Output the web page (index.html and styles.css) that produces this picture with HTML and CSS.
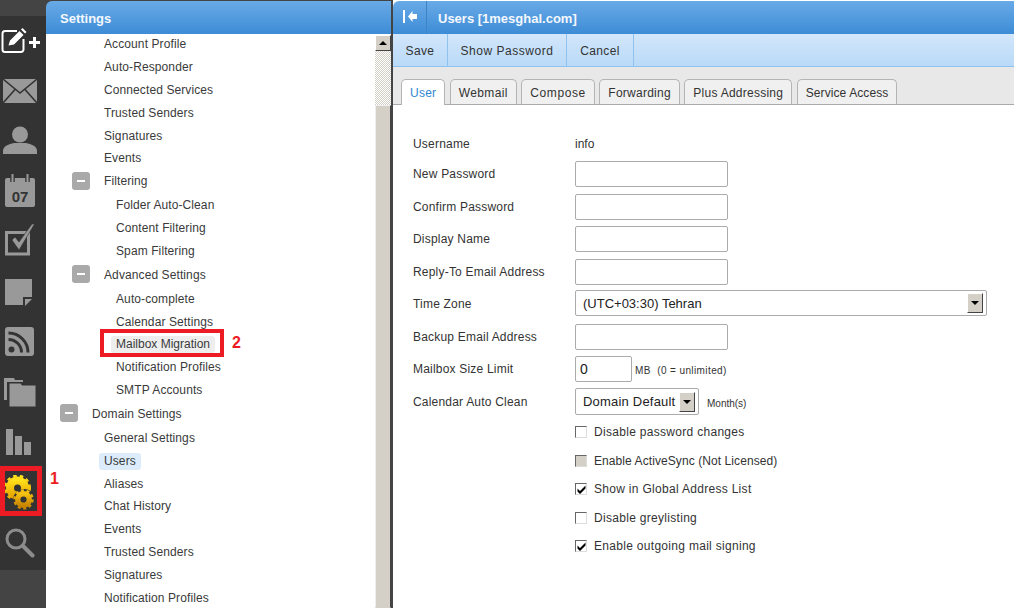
FILE: index.html
```html
<!DOCTYPE html>
<html lang="en">
<head>
<meta charset="utf-8">
<title>Users [1mesghal.com]</title>
<link rel="stylesheet" href="styles.css">
</head>
<body>
<div class="app">
  <nav class="rail">
    <div class="rail-top"></div>
    <div class="rail-icons">
      <svg class="ic ic-new" viewBox="0 0 42 30"><path d="M17 4H5a2.500 2.500 0 0 0-2.500 2.500v16A2.500 2.500 0 0 0 5 25h16a2.500 2.500 0 0 0 2.500-2.500V12" fill="none" stroke="#fff" stroke-width="2"/><path d="M8.500 18.500l1.500-5L19.500 4l4 4L14 17.500zM21 2.500L22.500 1l4 4L25 6.500z" fill="#fff"/><path d="M33 10h3v4h4v3h-4v4h-3v-4h-4v-3h4z" fill="#fff"/></svg>
      <svg class="ic ic-mail" viewBox="0 0 34 25"><path d="M0 1h34v24H0z" fill="#999"/><path d="M0 1l17 14L34 1M0 25l12-13.500M34 25L22 11.500" fill="none" stroke="#333" stroke-width="1.600"/></svg>
      <svg class="ic ic-user" viewBox="0 0 34 28"><circle cx="17" cy="8.500" r="8" fill="#999"/><path d="M0 28v-3c0-5 6-7 11-8h12c5 1 11 3 11 8v3z" fill="#999"/></svg>
      <svg class="ic ic-cal" viewBox="0 0 30 34"><path d="M2 5h26a2 2 0 0 1 2 2v25a2 2 0 0 1-2 2H2a2 2 0 0 1-2-2V7a2 2 0 0 1 2-2z" fill="#999"/><path d="M7.500 0v9M22.500 0v9" stroke="#333" stroke-width="4.500" fill="none"/><path d="M7.500 1v8M22.500 1v8" stroke="#999" stroke-width="2" fill="none"/><text x="15" y="29" class="cal-num">07</text></svg>
      <svg class="ic ic-task" viewBox="0 0 30 32"><path d="M1.500 8.500h22v21.500h-22z" fill="none" stroke="#999" stroke-width="3"/><path d="M7 16l3-3 4 5L27 0h2.500L14 26z" fill="#999" stroke="#333" stroke-width=".6"/></svg>
      <svg class="ic ic-note" viewBox="0 0 27 27"><path d="M0 0h27v18h-9v8H0z" fill="#999"/><path d="M20 20h7l-7 7z" fill="#999"/></svg>
      <svg class="ic ic-rss" viewBox="0 0 29 29"><rect width="29" height="29" rx="3" fill="#999"/><circle cx="6.500" cy="22.500" r="3" fill="#333"/><path d="M3.500 12.500a13 13 0 0 1 13 13M3.500 6a19.500 19.500 0 0 1 19.500 19.500" fill="none" stroke="#333" stroke-width="3"/></svg>
      <svg class="ic ic-folder" viewBox="0 0 32 29"><path d="M0 0h10l1 2h8v2H3v18H0z" fill="#999"/><path d="M5 5h12l1 2h14v22H5z" fill="#999" stroke="#333" stroke-width="1"/></svg>
      <svg class="ic ic-stats" viewBox="0 0 26 26"><path d="M0 0h7v26H0zM9 7h7v19H9zM18 13h7v13h-7z" fill="#999"/></svg>
      <svg class="ic ic-gear" viewBox="0 0 32 36">
        <defs>
          <linearGradient id="g1" x1="0" y1="0" x2="0" y2="1"><stop offset="0" stop-color="#ffe01a"/><stop offset="1" stop-color="#e8a800"/></linearGradient>
          <linearGradient id="g2" x1="0" y1="0" x2="0" y2="1"><stop offset="0" stop-color="#f5c211"/><stop offset="1" stop-color="#c98500"/></linearGradient>
        </defs>
        <circle cx="12.500" cy="13" r="7.500" fill="none" stroke="url(#g1)" stroke-width="8"/>
        <circle cx="12.500" cy="13" r="12" fill="none" stroke="url(#g1)" stroke-width="3" stroke-dasharray="3.400 3.100"/>
        <circle cx="19" cy="25" r="11" fill="#333"/>
        <circle cx="18.500" cy="24.500" r="5.800" fill="none" stroke="url(#g2)" stroke-width="5.400"/>
        <circle cx="18.500" cy="24.500" r="9" fill="none" stroke="url(#g2)" stroke-width="2.500" stroke-dasharray="3 2.650"/>
      </svg>
      <svg class="ic ic-search" viewBox="0 0 30 30"><circle cx="11" cy="11" r="9" fill="none" stroke="#8c8c8c" stroke-width="3"/><path d="M18 18L27.500 27.500" stroke="#8c8c8c" stroke-width="4" stroke-linecap="round"/></svg>
    </div>
    <div class="rail-bottom"></div>
    <div class="mark mark-gear"></div>
    <span class="mark-num mark-num-1">1</span>
  </nav>

  <aside class="settings">
    <header class="pane-title settings-title"><span class="title-text">Settings</span></header>
    <div class="settings-body">
      <ul class="tree">
        <li class="node lv2">Account Profile</li>
        <li class="node lv2">Auto-Responder</li>
        <li class="node lv2">Connected Services</li>
        <li class="node lv2">Trusted Senders</li>
        <li class="node lv2 short">Signatures</li>
        <li class="node lv2">Events</li>
        <li class="node lv2 tall"><span class="minus minus-2 minus-low"></span>Filtering</li>
        <li class="node lv3">Folder Auto-Clean</li>
        <li class="node lv3">Content Filtering</li>
        <li class="node lv3 tall">Spam Filtering</li>
        <li class="node lv2 tall"><span class="minus minus-2"></span>Advanced Settings</li>
        <li class="node lv3">Auto-complete</li>
        <li class="node lv3 short">Calendar Settings</li>
        <li class="node lv3"><span class="pill pill-hover">Mailbox Migration</span></li>
        <li class="node lv3">Notification Profiles</li>
        <li class="node lv3 tall">SMTP Accounts</li>
        <li class="node lv1 tall"><span class="minus minus-1"></span>Domain Settings</li>
        <li class="node lv2">General Settings</li>
        <li class="node lv2"><span class="pill pill-active">Users</span></li>
        <li class="node lv2 short">Aliases</li>
        <li class="node lv2">Chat History</li>
        <li class="node lv2">Events</li>
        <li class="node lv2">Trusted Senders</li>
        <li class="node lv2">Signatures</li>
        <li class="node lv2">Notification Profiles</li>
      </ul>
      <div class="scrollbar">
        <div class="sb-btn"><span class="tri"></span></div>
        <div class="sb-track"></div>
        <div class="sb-thumb"></div>
      </div>
      <div class="mark mark-item"></div>
      <span class="mark-num mark-num-2">2</span>
    </div>
  </aside>

  <main class="detail">
    <header class="pane-title detail-title">
      <span class="collapse"><svg viewBox="0 0 14 13" class="collapse-ic"><path d="M0 0h2v13H0zM5 6.500l4.500-5.500v3H14v5H9.500v3z" fill="#fff"/></svg></span>
      <span class="title-text detail-name">Users [1mesghal.com]</span>
    </header>
    <div class="toolbar">
      <button class="tool tool-save" type="button">Save</button>
      <button class="tool tool-show" type="button">Show Password</button>
      <button class="tool tool-cancel" type="button">Cancel</button>
    </div>
    <div class="tabs">
      <span class="tab tab-on">User</span>
      <span class="tab tab-web">Webmail</span>
      <span class="tab tab-wide">Compose</span>
      <span class="tab">Forwarding</span>
      <span class="tab tab-plus">Plus Addressing</span>
      <span class="tab tab-service">Service Access</span>
    </div>
    <form class="form">
      <div class="row row-first"><label class="lbl">Username</label><span class="val">info</span></div>
      <div class="row"><label class="lbl">New Password</label><input class="field" type="text"></div>
      <div class="row"><label class="lbl">Confirm Password</label><input class="field" type="text"></div>
      <div class="row"><label class="lbl">Display Name</label><input class="field" type="text"></div>
      <div class="row"><label class="lbl">Reply-To Email Address</label><input class="field" type="text"></div>
      <div class="row"><label class="lbl">Time Zone</label>
        <div class="select select-wide"><span class="sel-text">(UTC+03:30) Tehran</span><span class="sel-btn"><span class="tri"></span></span></div>
      </div>
      <div class="row"><label class="lbl">Backup Email Address</label><input class="field" type="text"></div>
      <div class="row"><label class="lbl">Mailbox Size Limit</label><input class="field field-num" type="text" value="0"><span class="hint hint-mb">MB&nbsp; (0 = unlimited)</span></div>
      <div class="row"><label class="lbl">Calendar Auto Clean</label>
        <div class="select select-small"><span class="sel-text">Domain Default</span><span class="sel-btn"><span class="tri"></span></span></div>
        <span class="hint hint-month">Month(s)</span>
      </div>
      <div class="checks">
        <div class="check"><span class="box"></span>Disable password changes</div>
        <div class="check check-tight"><span class="box box-off"></span>Enable ActiveSync (Not Licensed)</div>
        <div class="check"><span class="box"><svg viewBox="0 0 9 9" class="tick"><path d="M0.500 3.500l2.500 2.500L8.500 0.500v3L3 9 0.500 6.500z" fill="#000"/></svg></span>Show in Global Address List</div>
        <div class="check"><span class="box"></span>Disable greylisting</div>
        <div class="check"><span class="box"><svg viewBox="0 0 9 9" class="tick"><path d="M0.500 3.500l2.500 2.500L8.500 0.500v3L3 9 0.500 6.500z" fill="#000"/></svg></span>Enable outgoing mail signing</div>
      </div>
    </form>
  </main>
</div>
</body>
</html>
```
FILE: styles.css
```css
* { box-sizing: border-box; }
html, body { margin: 0; height: 100%; overflow: hidden; }
body { font-family: "Liberation Sans", Arial, sans-serif; font-size: 12px; color: #333; background: #fff; }
ul { list-style: none; margin: 0; padding: 0; }

.app { display: flex; height: 608px; width: 1014px; background: #444; }

/* icon rail */
.rail { width: 46px; flex: none; background: #333; display: flex; flex-direction: column; position: relative; }
.rail-top { height: 16px; background: #444; flex: none; }
.rail-icons { flex: 1; display: flex; flex-direction: column; align-items: flex-start; }
.rail-bottom { height: 38px; background: #444; flex: none; }
.ic { display: block; flex: none; }
.ic-new { width: 42px; height: 30px; margin: 11px 0 0 0; }
.ic-mail { width: 34px; height: 25px; margin: 21px 0 0 3px; }
.ic-user { width: 34px; height: 28px; margin: 23px 0 0 3px; }
.ic-cal { width: 30px; height: 34px; margin: 19px 0 0 5px; }
.ic-task { width: 30px; height: 32px; margin: 17px 0 0 5px; }
.ic-note { width: 27px; height: 27px; margin: 23px 0 0 5px; }
.ic-rss { width: 29px; height: 29px; margin: 21px 0 0 5px; }
.ic-folder { width: 32px; height: 29px; margin: 22px 0 0 4px; }
.ic-stats { width: 26px; height: 26px; margin: 22px 0 0 6px; }
.ic-gear { width: 32px; height: 36px; margin: 20px 0 0 5px; }
.ic-search { width: 30px; height: 30px; margin: 17px 0 0 5px; }
.cal-num { font: bold 15px "Liberation Sans", Arial, sans-serif; fill: #333; text-anchor: middle; }

/* annotations */
.mark { position: absolute; border: 5px solid #ed1c24; }
.mark-gear { left: 0; top: 466px; width: 42px; height: 50px; }
.mark-item { left: 54px; top: 295px; width: 124px; height: 28px; border-width: 4px; }
.mark-num { position: absolute; color: #ed1c24; font-weight: bold; font-size: 16px; line-height: 18px; }
.mark-num-1 { left: 50px; top: 470px; z-index: 2; }
.mark-num-2 { left: 186px; top: 300px; }

/* panes */
.pane-title { height: 33px; margin-top: 1px; color: #f4f8fd; font-weight: bold; font-size: 13px; background: linear-gradient(#69aae7, #3d8cd6); display: flex; align-items: center; flex: none; }
.title-text { margin-top: 2px; }
.settings { width: 345px; flex: none; display: flex; flex-direction: column; position: relative; }
.settings-title { padding-left: 14px; border-radius: 6px 0 0 0; }
.settings-body { flex: 1; background: #fff; display: flex; position: relative; min-height: 0; }
.tree { flex: 1; overflow: hidden; letter-spacing: .1px; }
.node { height: 23px; line-height: 21px; white-space: nowrap; position: relative; color: #3a3a3a; }
.short { height: 22px; }
.tall { height: 24px; }
.lv1 { padding-left: 46px; }
.lv2 { padding-left: 58px; }
.lv3 { padding-left: 70px; }
.minus { position: absolute; top: 0; width: 18px; height: 18px; background: #a9a9a9; border-radius: 3px; }
.minus::after { content: ""; position: absolute; left: 5px; top: 8px; width: 8px; height: 2px; background: #fff; }
.minus-low { top: 1px; }
.minus-2 { left: 26px; }
.minus-1 { left: 14px; }
.pill { display: inline-block; height: 17px; line-height: 17px; margin-left: -5px; padding: 0 5px; border-radius: 3px; }
.pill-hover { background: #eee; letter-spacing: 0; }
.pill-active { background: #dcecfb; }

.scrollbar { width: 16px; flex: none; position: relative; background: #fff; display: flex; flex-direction: column; }
.sb-btn { height: 16px; margin-top: 1px; background: #d4d0c8; border: 1px solid; border-color: #fff #444 #444 #fff; display: flex; align-items: center; justify-content: center; flex: none; }
.sb-btn .tri { border-bottom: 4px solid #000; border-top: 0; }
.sb-track { flex: 1; background-color: #fff; background-image: conic-gradient(#d4d0c8 25%, #fff 0 50%, #d4d0c8 0 75%, #fff 0); background-size: 2px 2px; }
.sb-thumb { position: absolute; left: 0; right: 0; top: 71px; bottom: 0; background: #d4d0c8; border: 1px solid; border-color: #eee #444 #d4d0c8 #eee; }
.tri { display: block; width: 0; height: 0; border-left: 4px solid transparent; border-right: 4px solid transparent; border-top: 4px solid #000; }

.detail { flex: 1; margin-left: 2px; background: #fff; display: flex; flex-direction: column; min-width: 0; }
.detail-title { border-radius: 6px 0 0 0; }
.collapse { width: 34px; height: 100%; display: flex; align-items: center; justify-content: center; border-right: 1px solid #3d83c6; flex: none; }
.collapse-ic { width: 14px; height: 13px; margin-bottom: 2px; }
.detail-name { padding-left: 11px; }
.toolbar { height: 33px; background: linear-gradient(#d2e6fb, #b9daf8); border-bottom: 1px solid #8fc2ef; display: flex; flex: none; }
.tool { height: 32px; border: 0; border-right: 1px solid #8fc2ef; background: none; padding: 2px 0 0; font: 12px "Liberation Sans", Arial, sans-serif; color: #333; letter-spacing: .35px; }
.tool-save { width: 55px; }
.tool-show { width: 119px; letter-spacing: .55px; }
.tool-cancel { width: 67px; }
.tabs { height: 38px; background: #e8e8e8; border-bottom: 1px solid #aaa; display: flex; align-items: flex-end; gap: 4.500px; padding-left: 8px; flex: none; }
.tab { height: 25px; line-height: 26px; padding: 0 8px; background: #f0f0f0; border: 1px solid #b4b4b4; border-bottom: 0; border-radius: 5px 5px 0 0; letter-spacing: .25px; white-space: nowrap; }
.tab-web { letter-spacing: .35px; }
.tab-wide { letter-spacing: .6px; }
.tab-plus { letter-spacing: .25px; }
.tab-service { letter-spacing: .1px; }
.tab-on { background: #fff; color: #2f86cf; height: 26px; margin-bottom: -1px; }

.form { padding: 24px 0 0 20px; }
.row { display: flex; align-items: center; height: 32.500px; }
.row-first { height: 29px; }
.lbl { width: 162px; flex: none; letter-spacing: .2px; }
.val { color: #333; }
.field { width: 153px; height: 26px; border: 1px solid #ababab; border-radius: 2px; padding: 0 4px; font: 14px "Liberation Sans", Arial, sans-serif; color: #222; background: #fff; }
.field-num { width: 57px; }
.hint { font-size: 10px; }
.hint-mb { margin: 2px 0 0 3px; letter-spacing: .4px; }
.hint-month { margin: 4px 0 0 8px; }
.select { height: 26px; border: 1px solid #ababab; border-radius: 2px; display: flex; align-items: center; background: #fff; font-size: 13px; color: #222; flex: none; }
.select-wide { width: 412px; margin-bottom: 2px; }
.select-small { width: 124px; height: 27px; letter-spacing: .2px; }
.sel-text { flex: 1; padding-left: 7px; white-space: nowrap; }
.sel-btn { width: 16px; height: 20px; margin-right: 3px; background: #d4d0c8; border: 1px solid; border-color: #fff #444 #444 #fff; display: flex; align-items: center; justify-content: center; flex: none; }
.checks { padding: 0 0 0 162px; }
.check { display: flex; align-items: center; height: 28px; letter-spacing: .3px; }
.check:nth-child(even) { height: 29px; }
.check-tight { letter-spacing: .08px; }
.box { width: 12px; height: 12px; margin-right: 7px; flex: none; border: 1px solid; border-color: #666 #ddd #ddd #666; background: #fff; display: flex; align-items: center; justify-content: center; }
.box-off { background: #d4d0c8; }
.tick { width: 9px; height: 9px; display: block; }
```
